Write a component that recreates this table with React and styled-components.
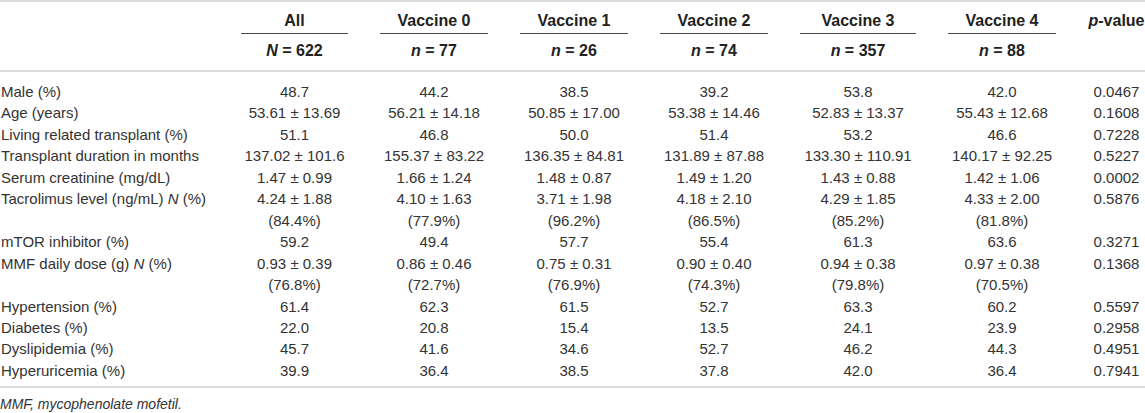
import React from "react";
import styled, { createGlobalStyle } from "styled-components";

const Global = createGlobalStyle`
  html, body { margin: 0; padding: 0; background: #fff; }
  body { font-family: "Liberation Sans", Arial, sans-serif; color: #333; }
`;

const COLS = "225px 139px 140px 140px 140px 148px 140px 1fr";

const Table = styled.div`
  width: 1145px;
  border-top: 2px solid #dcdcdc;
  border-bottom: 2px solid #dcdcdc;
  font-size: 15px;
`;

const Head = styled.div`
  border-bottom: 2px solid #dcdcdc;
`;

const HeadRow = styled.div`
  display: grid;
  grid-template-columns: ${COLS};
  line-height: 20px;
  font-size: 16px;
  font-weight: bold;
  color: #222;
`;

const HeadCell = styled.div`
  margin: 0 16px;
  text-align: center;
  white-space: nowrap;
  padding: ${(p) => (p.$second ? "7px 0 8px" : "9px 0 2px")};
  border-bottom: ${(p) => (p.$underline ? "1px solid #444" : "1px solid transparent")};
`;

const PHeadCell = styled.div`
  padding: ${(p) => (p.$second ? "7px 0 8px 16px" : "9px 0 2px 16px")};
  text-align: center;
  white-space: nowrap;
`;

const Body = styled.div`
  padding: 9px 0 5px;
`;

const BodyRow = styled.div`
  display: grid;
  grid-template-columns: ${COLS};
  line-height: 21.46px;
`;

const Label = styled.div`
  white-space: nowrap;
  padding-left: 1px;
`;

const Value = styled.div`
  text-align: center;
  white-space: nowrap;
`;

const PValue = styled.div`
  text-align: center;
  padding-left: 16px;
  white-space: nowrap;
`;

const Footnote = styled.div`
  font-size: 14px;
  font-style: italic;
  line-height: 18px;
  margin-top: 7px;
  color: #333;
`;

const headers = [
  ["All", "N", "622"],
  ["Vaccine 0", "n", "77"],
  ["Vaccine 1", "n", "26"],
  ["Vaccine 2", "n", "74"],
  ["Vaccine 3", "n", "357"],
  ["Vaccine 4", "n", "88"],
];

const rows = [
  { label: "Male (%)", vals: ["48.7", "44.2", "38.5", "39.2", "53.8", "42.0"], p: "0.0467" },
  { label: "Age (years)", vals: ["53.61 ± 13.69", "56.21 ± 14.18", "50.85 ± 17.00", "53.38 ± 14.46", "52.83 ± 13.37", "55.43 ± 12.68"], p: "0.1608" },
  { label: "Living related transplant (%)", vals: ["51.1", "46.8", "50.0", "51.4", "53.2", "46.6"], p: "0.7228" },
  { label: "Transplant duration in months", vals: ["137.02 ± 101.6", "155.37 ± 83.22", "136.35 ± 84.81", "131.89 ± 87.88", "133.30 ± 110.91", "140.17 ± 92.25"], p: "0.5227" },
  { label: "Serum creatinine (mg/dL)", vals: ["1.47 ± 0.99", "1.66 ± 1.24", "1.48 ± 0.87", "1.49 ± 1.20", "1.43 ± 0.88", "1.42 ± 1.06"], p: "0.0002" },
  { label: <>Tacrolimus level (ng/mL) <i>N</i> (%)</>, vals: ["4.24 ± 1.88", "4.10 ± 1.63", "3.71 ± 1.98", "4.18 ± 2.10", "4.29 ± 1.85", "4.33 ± 2.00"], sub: ["(84.4%)", "(77.9%)", "(96.2%)", "(86.5%)", "(85.2%)", "(81.8%)"], p: "0.5876" },
  { label: "mTOR inhibitor (%)", vals: ["59.2", "49.4", "57.7", "55.4", "61.3", "63.6"], p: "0.3271" },
  { label: <>MMF daily dose (g) <i>N</i> (%)</>, vals: ["0.93 ± 0.39", "0.86 ± 0.46", "0.75 ± 0.31", "0.90 ± 0.40", "0.94 ± 0.38", "0.97 ± 0.38"], sub: ["(76.8%)", "(72.7%)", "(76.9%)", "(74.3%)", "(79.8%)", "(70.5%)"], p: "0.1368" },
  { label: "Hypertension (%)", vals: ["61.4", "62.3", "61.5", "52.7", "63.3", "60.2"], p: "0.5597" },
  { label: "Diabetes (%)", vals: ["22.0", "20.8", "15.4", "13.5", "24.1", "23.9"], p: "0.2958" },
  { label: "Dyslipidemia (%)", vals: ["45.7", "41.6", "34.6", "52.7", "46.2", "44.3"], p: "0.4951" },
  { label: "Hyperuricemia (%)", vals: ["39.9", "36.4", "38.5", "37.8", "42.0", "36.4"], p: "0.7941" },
];

export default function App() {
  return (
    <>
      <Global />
      <Table>
        <Head>
          <HeadRow>
            <div />
            {headers.map(([t]) => (
              <HeadCell key={t} $underline>{t}</HeadCell>
            ))}
            <PHeadCell><i>p</i>-value</PHeadCell>
          </HeadRow>
          <HeadRow>
            <div />
            {headers.map(([t, v, n]) => (
              <HeadCell key={t} $second>
                <i>{v}</i> = {n}
              </HeadCell>
            ))}
            <PHeadCell $second />
          </HeadRow>
        </Head>
        <Body>
          {rows.map((r, i) => (
            <BodyRow key={i}>
              <Label>{r.label}</Label>
              {r.vals.map((v, j) => (
                <Value key={j}>
                  {v}
                  {r.sub && (
                    <>
                      <br />
                      {r.sub[j]}
                    </>
                  )}
                </Value>
              ))}
              <PValue>{r.p}</PValue>
            </BodyRow>
          ))}
        </Body>
      </Table>
      <Footnote>MMF, mycophenolate mofetil.</Footnote>
    </>
  );
}
